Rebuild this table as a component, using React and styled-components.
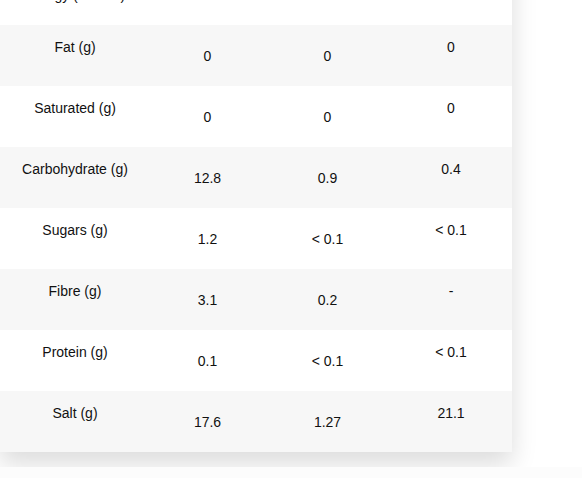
import styled, { createGlobalStyle } from "styled-components";

const GlobalStyle = createGlobalStyle`
  body {
    margin: 0;
    background: #fff;
    font-family: "Liberation Sans", Arial, sans-serif;
    overflow: hidden;
  }
`;

const Page = styled.div`
  width: 582px;
  height: 478px;
  overflow: hidden;
`;

const Card = styled.div`
  width: 512px;
  margin-top: -45px;
  background: #fff;
  box-shadow: 0 12px 24px rgba(0, 0, 0, 0.14);
`;

const Table = styled.table`
  width: 100%;
  border-collapse: collapse;
  table-layout: fixed;
  font-size: 14px;
  line-height: 16px;
  color: #111;
`;

const Row = styled.tr`
  height: ${(p) => (p.$tall ? 70 : 61)}px;
  background: ${(p) => (p.$shaded ? "#f7f7f7" : "#fff")};
`;

const Cell = styled.td`
  padding: ${(p) => p.$top}px 4px 0;
  text-align: center;
  vertical-align: top;
  white-space: nowrap;
`;

const Footer = styled.div`
  position: relative;
  margin-top: 15px;
  height: 30px;
  background: #fcfcfc;
`;

const rows = [
  ["Fat (g)", "0", "0", "0"],
  ["Saturated (g)", "0", "0", "0"],
  ["Carbohydrate (g)", "12.8", "0.9", "0.4"],
  ["Sugars (g)", "1.2", "< 0.1", "< 0.1"],
  ["Fibre (g)", "3.1", "0.2", "-"],
  ["Protein (g)", "0.1", "< 0.1", "< 0.1"],
  ["Salt (g)", "17.6", "1.27", "21.1"],
];

export default function App() {
  return (
    <Page>
      <GlobalStyle />
      <Card>
        <Table>
          <colgroup>
            <col style={{ width: 150 }} />
            <col style={{ width: 115 }} />
            <col style={{ width: 125 }} />
            <col style={{ width: 122 }} />
          </colgroup>
          <tbody>
            <Row $tall>
              <Cell $top={32}>Energy (kJ/kcal)</Cell>
              <Cell $top={8} />
              <Cell $top={8} />
              <Cell $top={8} />
            </Row>
            {rows.map((row, rowIndex) => (
              <Row key={rowIndex} $shaded={rowIndex % 2 === 0}>
                <Cell $top={14}>{row[0]}</Cell>
                <Cell $top={23}>{row[1]}</Cell>
                <Cell $top={23}>{row[2]}</Cell>
                <Cell $top={14}>{row[3]}</Cell>
              </Row>
            ))}
          </tbody>
        </Table>
      </Card>
      <Footer />
    </Page>
  );
}
